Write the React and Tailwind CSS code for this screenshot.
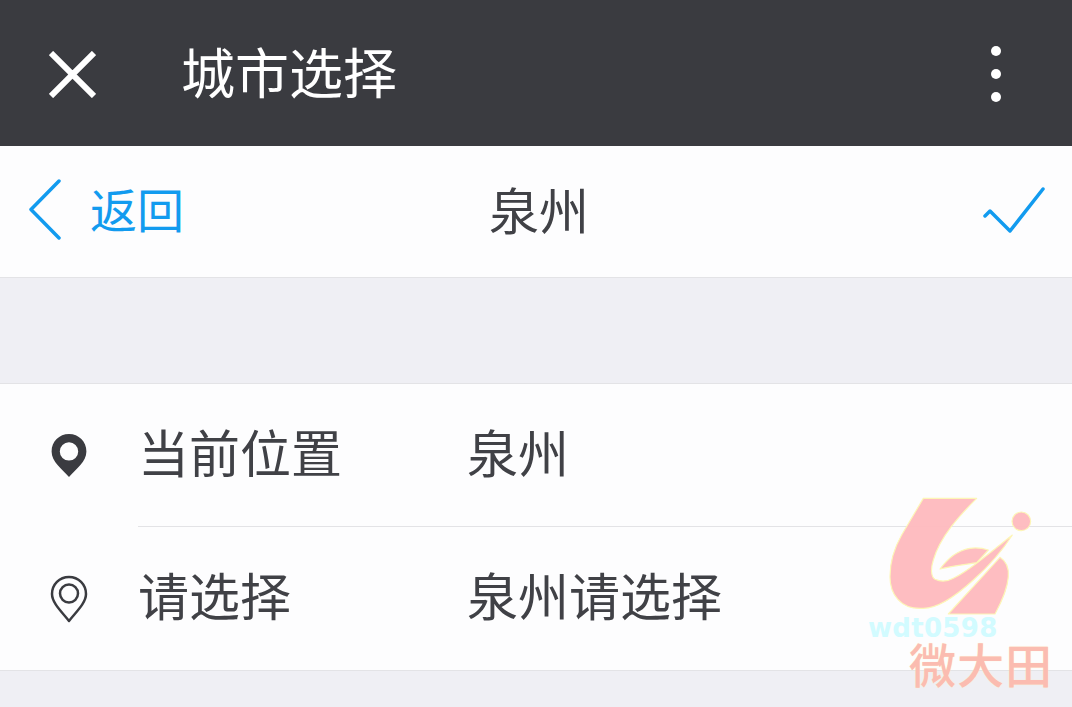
const cjk = { fontFamily: '"Noto Sans CJK SC", "Liberation Sans", sans-serif' };

function Row({ icon, label, value, height }) {
  return (
    <div className={`flex items-center ${height}`}>
      <div className="flex w-[138px] shrink-0 justify-center">{icon}</div>
      <span className="mb-2 w-[329px] shrink-0 text-[51px] leading-none text-[#404146]">{label}</span>
      <span className="mb-2 text-[51px] leading-none text-[#404146]">{value}</span>
    </div>
  );
}

function Watermark() {
  return (
    <div className="pointer-events-none absolute bottom-0 right-0 h-[227px] w-[212px]">
      <svg viewBox="0 0 636 681" className="absolute inset-0 h-full w-full opacity-95">
        <g fill="#ffbabe" stroke="#fdf6b4" strokeWidth="3.5" strokeLinejoin="round">
          <path d="M190 55 L350 55 C300 105 240 170 220 240 C212 265 212 290 225 298 C240 305 262 305 280 295 C320 275 370 235 457 165 C425 215 390 255 340 300 C285 350 235 385 190 385 C120 390 90 340 90 290 C90 240 105 200 125 165 Z" />
          <path d="M240 267 C265 235 290 212 330 205 C350 202 370 205 385 210 L350 248 C330 252 280 256 240 267 Z" />
          <path d="M265 402 L420 232 C440 245 447 265 445 290 C442 330 425 365 405 402 Z" />
          <circle cx="484" cy="124" r="28" />
        </g>
      </svg>
      <span className="absolute left-[8px] top-[138px] text-[26px] font-bold leading-[20px] tracking-[0.3px] text-[#d2fbff]" style={{ fontFamily: '"DejaVu Sans", sans-serif' }}>wdt0598</span>
      <span className="absolute left-[49px] top-[160px] whitespace-nowrap text-[47px] font-medium leading-[46px] tracking-[1px] text-[#fbacb0]/80 [text-shadow:0_0_1px_#fdf6b4]">微大田</span>
    </div>
  );
}

export default function App() {
  return (
    <div className="relative h-[707px] w-[1072px] overflow-hidden bg-[#efeff4]" style={cjk}>
      <header className="flex h-[146px] items-center justify-between bg-[#3a3b40] pl-[49px] pr-[71px]">
        <div className="flex items-center gap-[85px]">
          <svg width="47" height="47" viewBox="0 0 47 47" stroke="#fff" strokeWidth="6" className="mt-0.5 shrink-0">
            <path d="M2 2 L45 45 M45 2 L2 45" />
          </svg>
          <h1 className="mb-1 text-[54px] leading-none text-white">城市选择</h1>
        </div>
        <div className="mt-0.5 flex flex-col gap-[13px]">
          <span className="h-[10px] w-[10px] rounded-full bg-white" />
          <span className="h-[10px] w-[10px] rounded-full bg-white" />
          <span className="h-[10px] w-[10px] rounded-full bg-white" />
        </div>
      </header>

      <nav className="relative flex h-[132px] items-center justify-between border-b border-[#e3e3e6] bg-[#fdfdfe] pl-[29px] pr-[27px]">
        <div className="flex items-center gap-[29px]">
          <svg width="32" height="62" viewBox="0 0 32 62" fill="none" stroke="#129bef" strokeWidth="3.5" strokeLinecap="round" strokeLinejoin="round" className="mb-[3px]">
            <path d="M30 2 L2 30.5 L30 59" />
          </svg>
          <span className="mb-2 text-[47px] leading-none text-[#129bef]">返回</span>
        </div>
        <span className="absolute left-[489px] mb-2 text-[50px] leading-none text-[#404146]">泉州</span>
        <svg width="62" height="48" viewBox="0 0 62 48" fill="none" stroke="#129bef" strokeWidth="3.5" strokeLinecap="round" strokeLinejoin="round" className="mb-[2px]">
          <path d="M2 29 L7 24 L27 44 L60 2" />
        </svg>
      </nav>

      <section className="mt-[105px] border-y border-[#e3e3e6] bg-[#fdfdfe]">
        <Row
          label="当前位置"
          value="泉州"
          height="h-[142px]"
          icon={
            <svg width="36" height="43" viewBox="0 0 34 42">
              <path fillRule="evenodd" fill="#3a3b40" d="M17 0 C26.5 0 34 7.5 34 17 C34 27 24 34 17 42 C10 34 0 27 0 17 C0 7.5 7.5 0 17 0 Z M17 8 A9 9 0 1 0 17 26 A9 9 0 1 0 17 8 Z" />
            </svg>
          }
        />
        <div className="ml-[138px] h-px bg-[#e3e3e6]" />
        <Row
          label="请选择"
          value="泉州请选择"
          height="h-[143px]"
          icon={
            <svg width="38" height="48" viewBox="0 0 38 48" fill="none" stroke="#3a3b40" strokeWidth="2.5" strokeLinejoin="round">
              <path d="M19 2 C28.5 2 36 9.5 36 19 C36 28 26 37 19 46 C12 37 2 28 2 19 C2 9.5 9.5 2 19 2 Z" />
              <circle cx="19" cy="18.5" r="9" />
            </svg>
          }
        />
      </section>

      <Watermark />
    </div>
  );
}
